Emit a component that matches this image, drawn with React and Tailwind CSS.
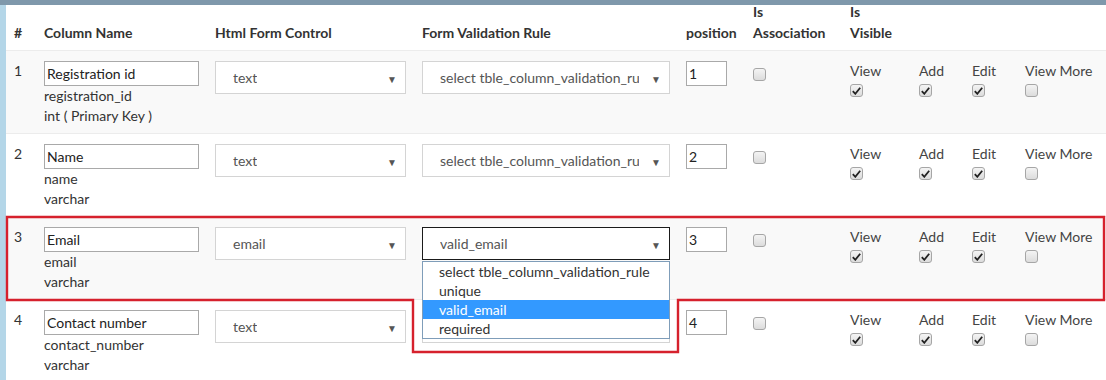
import React from "react";

const RULE_PLACEHOLDER = "select tble_column_validation_rule";

const rows = [
  { n: 1, label: "Registration id", name: "registration_id", type: "int ( Primary Key )", control: "text", rule: RULE_PLACEHOLDER, pos: "1" },
  { n: 2, label: "Name", name: "name", type: "varchar", control: "text", rule: RULE_PLACEHOLDER, pos: "2" },
  { n: 3, label: "Email", name: "email", type: "varchar", control: "email", rule: "valid_email", pos: "3", open: true },
  { n: 4, label: "Contact number", name: "contact_number", type: "varchar", control: "text", rule: RULE_PLACEHOLDER, pos: "4" },
];

const ruleOptions = [RULE_PLACEHOLDER, "unique", "valid_email", "required"];

const gridCols =
  "grid grid-cols-[30px_171px_207px_264px_67px_97px_69px_53px_53px_89px]";

function Checkbox({ checked }) {
  return (
    <span className="inline-flex items-center justify-center w-[13px] h-[13px] rounded-[3px] border border-[#a6a6a6] bg-gradient-to-b from-[#f4f4f4] to-[#dcdcdc]">
      {checked && (
        <svg width="9" height="8" viewBox="0 0 9 8">
          <path d="M0.8 4.2 L3.3 6.8 L8.2 0.8" fill="none" stroke="#222" strokeWidth="1.8" />
        </svg>
      )}
    </span>
  );
}

function Select({ value, focused }) {
  return (
    <div
      className={
        "relative flex items-center h-[33px] w-full bg-white pl-[17px] pr-[30px] " +
        (focused ? "border border-[#1a1a1a]" : "border border-[#d4d4d4]")
      }
    >
      <span className="block overflow-hidden whitespace-nowrap text-[#555] text-[14px]">{value}</span>
      <span className="absolute right-[8px] top-[10px] text-[10px] text-[#555]">▼</span>
    </div>
  );
}

function App() {
  return (
    <div className="relative w-[1106px] h-[380px] overflow-hidden bg-white font-[Lato,sans-serif] text-[14px] text-[#333]">
      {/* top bar */}
      <div className="h-[5px] bg-[#7f98ab]"></div>

      <div className="flex">
        {/* left strip */}
        <div className="w-[6px] shrink-0 bg-[#b4d6e8] min-h-[375px]"></div>

        {/* table */}
        <div className="flex flex-col">
          {/* header */}
          <div className={gridCols + " h-[45px] grid-rows-[45px] items-end font-bold text-[#333] leading-[21px]"}>
            <div className="px-2 pb-[7px]">#</div>
            <div className="px-2 pb-[7px]">Column Name</div>
            <div className="px-2 pb-[7px]">Html Form Control</div>
            <div className="px-2 pb-[7px]">Form Validation Rule</div>
            <div className="px-2 pb-[7px] whitespace-nowrap">position</div>
            <div className="px-2 pb-[7px] flex flex-col">
              <span>Is</span>
              <span>Association</span>
            </div>
            <div className="px-2 pb-[7px] flex flex-col">
              <span>Is</span>
              <span>Visible</span>
            </div>
            <div></div>
            <div></div>
            <div></div>
          </div>

          {/* rows */}
          {rows.map((r, i) => (
            <div
              key={r.n}
              className={
                gridCols +
                " h-[83px] pt-[10px] border-t border-[#ececec] " +
                (i % 2 === 0 ? "bg-[#f9f9f9]" : "bg-white")
              }
            >
              <div className="px-2 leading-[20px]">{r.n}</div>
              <div className="px-2 flex flex-col">
                <div className="h-[25px] w-full border border-[#a9a9a9] bg-white px-[2px] flex items-center text-[14px] text-[#222]">
                  {r.label}
                </div>
                <div className="leading-[20px]">{r.name}</div>
                <div className="leading-[20px]">{r.type}</div>
              </div>
              <div className="px-2">
                <Select value={r.control} />
              </div>
              <div className="px-2 relative">
                {r.n === 4 ? (
                  <div className="h-[33px] w-full border border-[#d4d4d4] bg-white"></div>
                ) : (
                  <Select value={r.rule} focused={r.open} />
                )}
                {r.open && (
                  <div className="absolute z-10 left-2 right-2 top-[34px] bg-white border border-[#7f9db9] text-[14px] text-[#333]">
                    {ruleOptions.map((o) => (
                      <div
                        key={o}
                        className={
                          "h-[19px] leading-[19px] pl-[16px] whitespace-nowrap " +
                          (o === r.rule ? "bg-[#3399ff] text-white" : "")
                        }
                      >
                        {o}
                      </div>
                    ))}
                  </div>
                )}
              </div>
              <div className="px-2">
                <div className="h-[25px] w-[41px] border border-[#a9a9a9] bg-white px-[2px] flex items-center text-[#222]">
                  {r.pos}
                </div>
              </div>
              <div className="px-2 pt-[4px]">
                <Checkbox />
              </div>
              {["View", "Add", "Edit", "View More"].map((lbl) => (
                <div key={lbl} className="px-2 flex flex-col items-start">
                  <span className="leading-[20px] whitespace-nowrap text-[#444]">{lbl}</span>
                  <span className="mt-[3px] flex">
                    <Checkbox checked={lbl !== "View More"} />
                  </span>
                </div>
              ))}
            </div>
          ))}
        </div>
      </div>

      {/* red annotation outline */}
      <svg
        className="absolute left-0 top-0 pointer-events-none z-20"
        width="1106"
        height="380"
        viewBox="0 0 1106 380"
      >
        <path
          d="M7 217 H1104 V300 H678 V352 H413 V300 H7 Z"
          fill="none"
          stroke="#d6212d"
          strokeWidth="2.4"
        />
      </svg>
    </div>
  );
}

export default App;
